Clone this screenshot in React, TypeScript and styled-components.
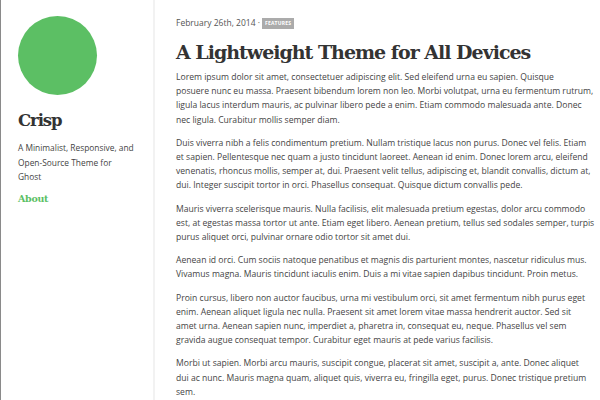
import React from "react";
import styled, { createGlobalStyle } from "styled-components";

const Global = createGlobalStyle`
  html, body { margin: 0; padding: 0; background: #fff; }
  body { font-family: "Open Sans", "Liberation Sans", sans-serif; }
`;

const Page = styled.div`
  display: flex;
  width: 600px;
  height: 400px;
  overflow: hidden;
  border-left: 1px solid #8a8a8a;
  box-sizing: border-box;
`;

const Sidebar = styled.aside`
  width: 154px;
  flex: none;
  padding: 16px 0 0 17px;
  box-sizing: border-box;
  border-right: 2px solid #f2f2f2;
`;

const Logo = styled.div`
  width: 79px;
  height: 79px;
  border-radius: 50%;
  background: #5cbf64;
`;

const slab = `"DejaVu Serif", serif`;

const BlogTitle = styled.h1`
  margin: 15px 0 0;
  font-family: ${slab};
  font-weight: bold;
  font-size: 16.5px;
  line-height: 22px;
  letter-spacing: -1.1px;
  color: #333;
`;

const Description = styled.p`
  margin: 9px 0 0;
  max-width: 118px;
  font-size: 8.4px;
  line-height: 14.5px;
  color: #444;
`;

const NavLink = styled.a`
  display: block;
  margin-top: 8px;
  font-family: ${slab};
  font-weight: bold;
  font-size: 9.5px;
  letter-spacing: -0.3px;
  color: #5cbf64;
  text-decoration: none;
`;

const Main = styled.main`
  flex: 1;
  padding: 16px 0 0 21px;
  min-width: 0;
`;

const Meta = styled.div`
  display: flex;
  align-items: center;
  gap: 2px;
  font-size: 8.5px;
  line-height: 14px;
  color: #555;
`;

const Tag = styled.span`
  background: #ababab;
  color: #fff;
  font-size: 5px;
  font-weight: bold;
  letter-spacing: 0.2px;
  padding: 2px 3px;
  line-height: 7px;
`;

const PostTitle = styled.h2`
  margin: 9px 0 5px;
  font-family: ${slab};
  font-weight: bold;
  font-size: 19px;
  line-height: 26px;
  letter-spacing: -1px;
  color: #333;
  white-space: nowrap;
`;

const Para = styled.p`
  margin: 0 0 9px;
  font-size: 8.6px;
  line-height: 14.2px;
  color: #444;
  white-space: nowrap;
`;

const paras: string[][] = [
  [
    "Lorem ipsum dolor sit amet, consectetuer adipiscing elit. Sed eleifend urna eu sapien. Quisque",
    "posuere nunc eu massa. Praesent bibendum lorem non leo. Morbi volutpat, urna eu fermentum rutrum,",
    "ligula lacus interdum mauris, ac pulvinar libero pede a enim. Etiam commodo malesuada ante. Donec",
    "nec ligula. Curabitur mollis semper diam.",
  ],
  [
    "Duis viverra nibh a felis condimentum pretium. Nullam tristique lacus non purus. Donec vel felis. Etiam",
    "et sapien. Pellentesque nec quam a justo tincidunt laoreet. Aenean id enim. Donec lorem arcu, eleifend",
    "venenatis, rhoncus mollis, semper at, dui. Praesent velit tellus, adipiscing et, blandit convallis, dictum at,",
    "dui. Integer suscipit tortor in orci. Phasellus consequat. Quisque dictum convallis pede.",
  ],
  [
    "Mauris viverra scelerisque mauris. Nulla facilisis, elit malesuada pretium egestas, dolor arcu commodo",
    "est, at egestas massa tortor ut ante. Etiam eget libero. Aenean pretium, tellus sed sodales semper, turpis",
    "purus aliquet orci, pulvinar ornare odio tortor sit amet dui.",
  ],
  [
    "Aenean id orci. Cum sociis natoque penatibus et magnis dis parturient montes, nascetur ridiculus mus.",
    "Vivamus magna. Mauris tincidunt iaculis enim. Duis a mi vitae sapien dapibus tincidunt. Proin metus.",
  ],
  [
    "Proin cursus, libero non auctor faucibus, urna mi vestibulum orci, sit amet fermentum nibh purus eget",
    "enim. Aenean aliquet ligula nec nulla. Praesent sit amet lorem vitae massa hendrerit auctor. Sed sit",
    "amet urna. Aenean sapien nunc, imperdiet a, pharetra in, consequat eu, neque. Phasellus vel sem",
    "gravida augue consequat tempor. Curabitur eget mauris at pede varius facilisis.",
  ],
  [
    "Morbi ut sapien. Morbi arcu mauris, suscipit congue, placerat sit amet, suscipit a, ante. Donec aliquet",
    "dui ac nunc. Mauris magna quam, aliquet quis, viverra eu, fringilla eget, purus. Donec tristique pretium",
    "sem.",
  ],
];

export default function App() {
  return (
    <>
      <Global />
      <Page>
        <Sidebar>
          <Logo />
          <BlogTitle>Crisp</BlogTitle>
          <Description>
            A Minimalist, Responsive, and Open-Source Theme for Ghost
          </Description>
          <NavLink href="#">About</NavLink>
        </Sidebar>
        <Main>
          <Meta>
            <span>February 26th, 2014 ·</span>
            <Tag>FEATURES</Tag>
          </Meta>
          <PostTitle>A Lightweight Theme for All Devices</PostTitle>
          {paras.map((lines, i) => (
            <Para key={i}>
              {lines.map((l, j) => (
                <React.Fragment key={j}>
                  {j > 0 && <br />}
                  {l}
                </React.Fragment>
              ))}
            </Para>
          ))}
        </Main>
      </Page>
    </>
  );
}
